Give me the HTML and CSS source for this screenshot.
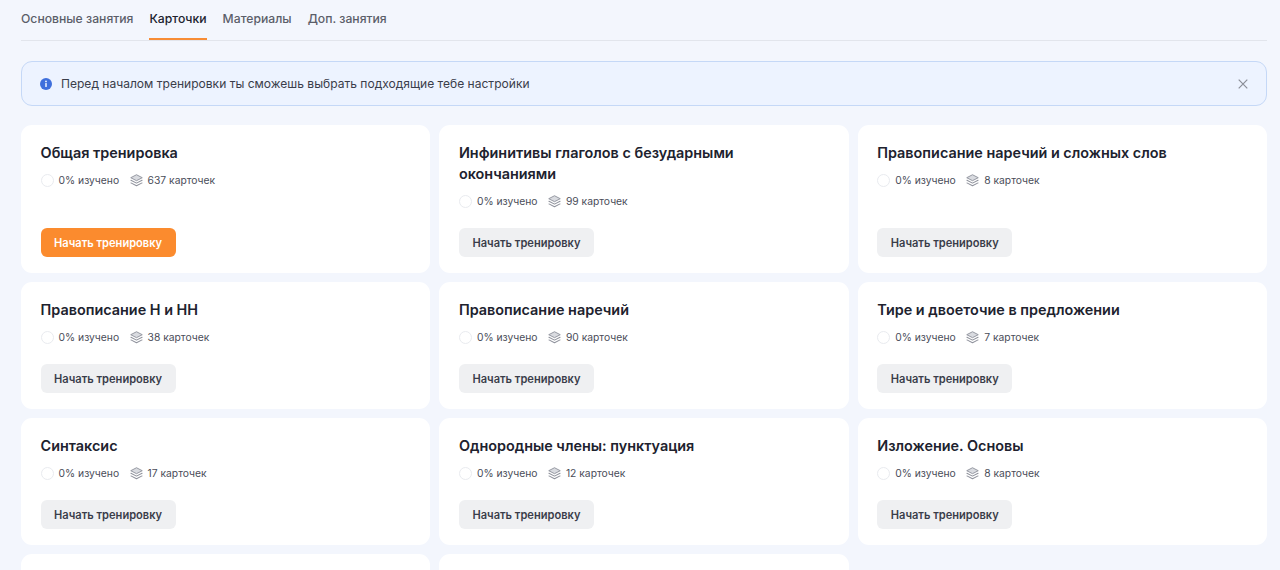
FILE: index.html
```html
<!DOCTYPE html>
<html lang="ru">
<head>
    <meta charset="UTF-8">
    <meta name="viewport" content="width=device-width, initial-scale=1.0">
    <title>Карточки</title>
    <link rel="stylesheet" href="styles.css">
</head>
<body>
    <svg class="sprite" width="0" height="0">
        <symbol id="stack" viewBox="0 0 14 14">
            <path d="M7 .8 13.2 4 7 7.2.8 4Z" fill="#d9dbe0" stroke="currentColor" stroke-width="1" stroke-linejoin="round"/>
            <path d="M1 6.7 7 9.8l6-3.1M1 9.6l6 3.1 6-3.1" fill="none" stroke="currentColor" stroke-width="1.1" stroke-linecap="round" stroke-linejoin="round"/>
        </symbol>
    </svg>
    <nav class="tabs">
        <a class="tab">Основные занятия</a>
        <a class="tab active">Карточки</a>
        <a class="tab">Материалы</a>
        <a class="tab">Доп. занятия</a>
    </nav>
    <div class="alert">
        <svg class="alert-icon" viewBox="0 0 12 12" width="12" height="12">
            <circle cx="6" cy="6" r="6" fill="#3f6fdc"/>
            <rect x="5.3" y="5" width="1.4" height="4" rx="0.5" fill="#fff"/>
            <circle cx="6" cy="3.4" r="0.85" fill="#fff"/>
        </svg>
        <span class="alert-text">Перед началом тренировки ты сможешь выбрать подходящие тебе настройки</span>
        <svg class="alert-close" viewBox="0 0 10 10" width="10" height="10">
            <path d="M.7.7l8.6 8.6M9.3.7.7 9.3" stroke="currentColor" stroke-width="1.2" fill="none"/>
        </svg>
    </div>
    <main class="grid">
        <div class="card">
            <h3>Общая тренировка</h3>
            <div class="meta">
                <span class="ring"></span><span class="learned">0% изучено</span>
                <svg class="stack"><use href="#stack"/></svg><span>637 карточек</span>
            </div>
            <button class="start primary">Начать тренировку</button>
        </div>
        <div class="card">
            <h3>Инфинитивы глаголов с безударными окончаниями</h3>
            <div class="meta">
                <span class="ring"></span><span class="learned">0% изучено</span>
                <svg class="stack"><use href="#stack"/></svg><span>99 карточек</span>
            </div>
            <button class="start">Начать тренировку</button>
        </div>
        <div class="card">
            <h3>Правописание наречий и сложных слов</h3>
            <div class="meta">
                <span class="ring"></span><span class="learned">0% изучено</span>
                <svg class="stack"><use href="#stack"/></svg><span>8 карточек</span>
            </div>
            <button class="start">Начать тренировку</button>
        </div>
        <div class="card">
            <h3>Правописание Н и НН</h3>
            <div class="meta">
                <span class="ring"></span><span class="learned">0% изучено</span>
                <svg class="stack"><use href="#stack"/></svg><span>38 карточек</span>
            </div>
            <button class="start">Начать тренировку</button>
        </div>
        <div class="card">
            <h3>Правописание наречий</h3>
            <div class="meta">
                <span class="ring"></span><span class="learned">0% изучено</span>
                <svg class="stack"><use href="#stack"/></svg><span>90 карточек</span>
            </div>
            <button class="start">Начать тренировку</button>
        </div>
        <div class="card">
            <h3>Тире и двоеточие в предложении</h3>
            <div class="meta">
                <span class="ring"></span><span class="learned">0% изучено</span>
                <svg class="stack"><use href="#stack"/></svg><span>7 карточек</span>
            </div>
            <button class="start">Начать тренировку</button>
        </div>
        <div class="card">
            <h3>Синтаксис</h3>
            <div class="meta">
                <span class="ring"></span><span class="learned">0% изучено</span>
                <svg class="stack"><use href="#stack"/></svg><span>17 карточек</span>
            </div>
            <button class="start">Начать тренировку</button>
        </div>
        <div class="card">
            <h3>Однородные члены: пунктуация</h3>
            <div class="meta">
                <span class="ring"></span><span class="learned">0% изучено</span>
                <svg class="stack"><use href="#stack"/></svg><span>12 карточек</span>
            </div>
            <button class="start">Начать тренировку</button>
        </div>
        <div class="card">
            <h3>Изложение. Основы</h3>
            <div class="meta">
                <span class="ring"></span><span class="learned">0% изучено</span>
                <svg class="stack"><use href="#stack"/></svg><span>8 карточек</span>
            </div>
            <button class="start">Начать тренировку</button>
        </div>
        <div class="card blank"></div>
        <div class="card blank"></div>
    </main>
</body>
</html>
```

FILE: styles.css
```css
* {
    box-sizing: border-box;
}
html, body {
    height: 570px;
    overflow: hidden;
}
body {
    margin: 0;
    padding: 0 13px 0 21px;
    background: #f3f6fd;
    color: #20222e;
    font-family: Inter, "Noto Sans", sans-serif;
}
.sprite {
    position: absolute;
}
.tabs {
    display: flex;
    gap: 16px;
    height: 41px;
    border-bottom: 1px solid #e2e5ec;
}
.tab {
    height: 40px;
    padding-top: 11px;
    font-size: 12.2px;
    line-height: 15px;
    font-weight: 500;
    color: #5b5e69;
}
.tab.active {
    color: #20222e;
    border-bottom: 2px solid #f78c35;
}
.alert {
    display: flex;
    align-items: center;
    height: 45px;
    margin-top: 20px;
    padding: 0 18px;
    background: #edf3ff;
    border: 1px solid #c5d8f7;
    border-radius: 11px;
}
.alert-icon {
    flex: none;
    margin-right: 9px;
}
.alert-text {
    flex: 1;
    font-size: 12.05px;
    color: #3a3d4a;
}
.alert-close {
    color: #8a8d97;
}
.grid {
    display: grid;
    grid-template-columns: repeat(3, 1fr);
    gap: 9px;
    margin-top: 19px;
}
.card {
    display: flex;
    flex-direction: column;
    align-items: flex-start;
    min-height: 127px;
    padding: 17px 20px 16px 19.6px;
    background: #fff;
    border-radius: 11px;
}
.card h3 {
    margin: 0;
    font-size: 14.4px;
    line-height: 21px;
    font-weight: 600;
}
.meta {
    display: flex;
    align-items: center;
    height: 16px;
    margin-top: 9px;
    margin-bottom: 19px;
    font-size: 10.3px;
    color: #4a4d59;
}
.ring {
    width: 13px;
    height: 13px;
    margin-right: 5px;
    border: 1.5px solid #e9ebef;
    border-radius: 50%;
}
.learned {
    margin-right: 10.5px;
}
.stack {
    width: 13px;
    height: 13px;
    margin-right: 5px;
    color: #8f929c;
}
.start {
    margin-top: auto;
    height: 29px;
    padding: 0 13.5px;
    border: none;
    border-radius: 6px;
    background: #eff0f2;
    color: #3a3d4a;
    font-family: inherit;
    font-size: 11.1px;
    font-weight: 600;
}
.start.primary {
    background: #fb8b2e;
    color: #fff;
}
```
